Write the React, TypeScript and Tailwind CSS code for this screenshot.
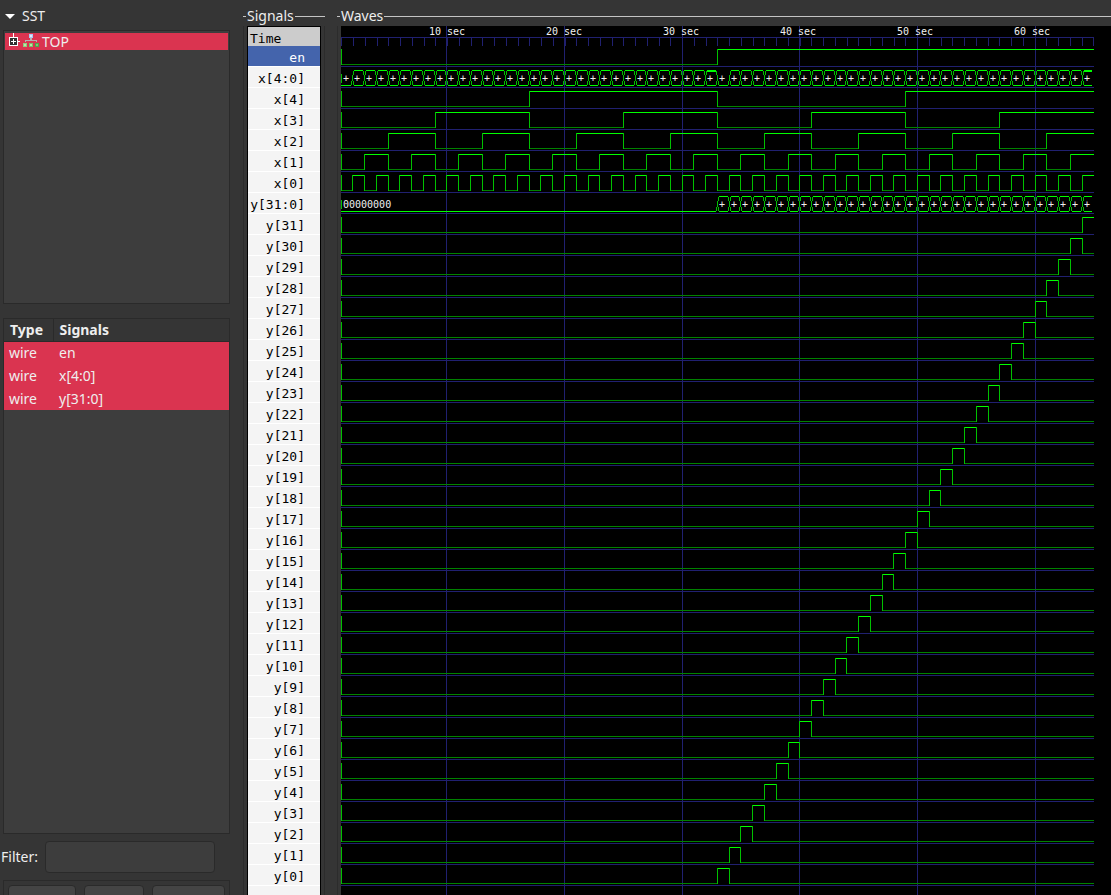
import React from "react";

const ROW = 21;
const PX_PER_SECOND = 11.765;
const END_X = 753;

const GRID = "#202070";
const HIGH = "#00ff00";
const EDGE = "#00c000";
const LOW = "#008200";

/** Horizontal pixel of a time stamp; the trace starts at t = 1. */
const px = (t: number) =>
  Math.max(0, t >= 65 ? END_X : Math.floor(PX_PER_SECOND * t - 11.8));

type Bit = { kind: "bit"; name: string; value: (t: number) => boolean };
type Bus = { kind: "bus"; name: string; value: (t: number) => number; max?: number };
type Signal = Bit | Bus;

const xAt = (t: number) => (t - 1) % 32;
const enAt = (t: number) => t >= 33;

const SIGNALS: Signal[] = [
  { kind: "bit", name: "en", value: enAt },
  { kind: "bus", name: "x[4:0]", value: xAt, max: 31 },
  ...[4, 3, 2, 1, 0].map(
    (b): Bit => ({ kind: "bit", name: `x[${b}]`, value: (t) => ((xAt(t) >> b) & 1) === 1 })
  ),
  { kind: "bus", name: "y[31:0]", value: (t) => (enAt(t) ? xAt(t) + 1 : 0) },
  ...Array.from({ length: 32 }, (_, i) => 31 - i).map(
    (b): Bit => ({ kind: "bit", name: `y[${b}]`, value: (t) => enAt(t) && xAt(t) === b })
  ),
];

function runs<T>(value: (t: number) => T) {
  const out: { from: number; to: number; v: T }[] = [];
  for (let t = 1; t < 65; t++) {
    const v = value(t);
    const last = out[out.length - 1];
    if (last && last.v === v) last.to = t + 1;
    else out.push({ from: t, to: t + 1, v });
  }
  return out;
}

function BitTrace({ signal, top }: { signal: Bit; top: number }) {
  return (
    <g>
      {runs(signal.value).map(({ from, to, v }) => {
        const a = px(from);
        const b = px(to);
        return (
          <g key={from}>
            <rect x={a} y={v ? top : top + 15} width={b - a + (to < 65 ? 1 : 0)} height={1} fill={v ? HIGH : LOW} />
            <rect x={a} y={top} width={1} height={16} fill={EDGE} />
          </g>
        );
      })}
    </g>
  );
}

function BusTrace({ signal, top }: { signal: Bus; top: number }) {
  return (
    <g>
      {runs(signal.value).map(({ from, to, v }) => {
        const a = px(from);
        const b = px(to);
        const last = to === 65;
        const first = from === 1;
        const left = first ? a : a + 2;
        const right = last ? b - 2 : b - 1;
        const zero = v === 0;
        return (
          <g key={from}>
            <g fill={EDGE}>
              {first && <rect x={a} y={top + 4} width={1} height={9} />}
              {!first && !zero && <rect x={a + 1} y={top + 1} width={1} height={4} />}
              {!first && <rect x={a + 1} y={top + 11} width={1} height={4} />}
              {!first && <rect x={a} y={top + 5} width={1} height={6} />}
              {!last && !zero && <rect x={b - 1} y={top + 1} width={1} height={4} />}
              {!last && <rect x={b - 1} y={top + 11} width={1} height={4} />}
            </g>
            <rect x={left} y={top + 15} width={right - left} height={1} fill={HIGH} />
            {!zero && (
              <rect x={left} y={top} width={right - left} height={v === signal.max ? 2 : 1} fill={HIGH} />
            )}
            <text x={a + 2} y={top + 12}>{to - from > 1 ? "00000000" : "+"}</text>
          </g>
        );
      })}
    </g>
  );
}

function WaveView() {
  const marks = [10, 20, 30, 40, 50, 60];
  return (
    <svg
      className="block h-full w-full font-['DejaVu_Sans_Mono',monospace] text-[10px]"
      shapeRendering="crispEdges"
      fill="#f0f0f0"
      role="img"
      aria-label="Waveforms"
    >
      <rect x={0} y={11} width={END_X} height={1} fill={GRID} />
      {Array.from({ length: 65 }, (_, n) => (
        <rect key={n} x={Math.ceil(n * 11.75)} y={11} width={1} height={9} fill={GRID} />
      ))}
      {SIGNALS.map((s, i) => (
        <rect key={s.name} x={0} y={40 + i * ROW} width={END_X} height={1} fill={GRID} />
      ))}
      {marks.map((m) => (
        <rect key={m} x={px(m)} y={0} width={1} height="100%" fill={GRID} />
      ))}
      {marks.map((m, i) => (
        <text key={m} x={88 + i * 117} y={9}>{`${m} sec`}</text>
      ))}
      {SIGNALS.map((s, i) =>
        s.kind === "bit" ? (
          <BitTrace key={s.name} signal={s} top={23 + i * ROW} />
        ) : (
          <BusTrace key={s.name} signal={s} top={23 + i * ROW} />
        )
      )}
    </svg>
  );
}

function FrameTitle({ children }: { children: React.ReactNode }) {
  return (
    <div className="flex h-[26px] shrink-0 items-center pt-[6px]">
      <span className="h-px w-[3px] bg-[#c4c4c4]" />
      <h2 className="px-px leading-5">{children}</h2>
      <span className="h-px flex-1 bg-[#c4c4c4]" />
    </div>
  );
}

function HierarchyIcon() {
  return (
    <svg width="37" height="17" shapeRendering="crispEdges" aria-hidden="true">
      <path d="M8 0h1v4h-1zM14 8h1v1h-1z" fill="#fff" />
      <rect x="4" y="4" width="9" height="9" fill="#fff" />
      <rect x="5" y="5" width="7" height="7" fill="#303030" />
      <path d="M6 8h5v1h-5zM8 6h1v5h-1zM13 8h2v1h-2z" fill="#fff" />
      <rect x="24" y="1" width="4" height="4" fill="#a9c9f2" />
      <rect x="25" y="2" width="2" height="2" fill="#dceafc" />
      <path d="M25 5h2v2h-2zM20 7h12v1h-12zM20 8h1v1h-1zM31 8h1v1h-1z" fill="#b9aeb0" />
      <path d="M18 10h4v4h-4z" fill="#8fd07f" />
      <path d="M24 10h4v4h-4z" fill="#79c46c" />
      <path d="M30 10h4v4h-4z" fill="#4fa84a" />
      <path d="M19 11h2v2h-2zM25 11h2v2h-2z" fill="#b9e6a8" />
      <path d="M31 11h2v2h-2z" fill="#7cc873" />
    </svg>
  );
}

const WIRES = ["en", "x[4:0]", "y[31:0]"];

function Sidebar() {
  return (
    <aside className="flex w-[243px] shrink-0 flex-col">
      <button type="button" className="flex h-[30px] shrink-0 items-center gap-[7px] pt-[2px] pl-[5px] text-left">
        <svg width="10" height="5" aria-hidden="true">
          <path d="M0 0h10L5 5z" fill="#fff" />
        </svg>
        SST
      </button>
      <div role="tree" aria-label="SST" className="mr-[13px] ml-[3px] h-[274px] shrink-0 border border-[#2a2a2a] bg-[#3d3d3d] px-px pt-[2px]">
        <div role="treeitem" aria-selected="true" className="flex h-[17px] items-center bg-[#da3450]">
          <HierarchyIcon />
          TOP
        </div>
      </div>
      <div className="mt-[14px] mr-[13px] ml-[3px] h-[516px] shrink-0 border border-[#2a2a2a] bg-[#3d3d3d]">
        <table className="w-full border-collapse text-left">
          <thead>
            <tr className="h-[22px] border-b border-[#2a2a2a] bg-[#353535]">
              <th className="w-[49px] border-r border-[#2a2a2a] p-0 pl-[6px] leading-5 font-bold">Type</th>
              <th className="p-0 pl-[6px] leading-5 font-bold">Signals</th>
            </tr>
          </thead>
          <tbody>
            {WIRES.map((name) => (
              <tr key={name} className="h-[23px] bg-[#da3450]">
                <td className="p-0 pl-[5px] leading-5">wire</td>
                <td className="p-0 pl-[6px] leading-5">{name}</td>
              </tr>
            ))}
          </tbody>
        </table>
      </div>
      <div className="mt-[7px] flex shrink-0 items-center gap-1 pl-px">
        <label htmlFor="filter" className="w-10 leading-5">Filter:</label>
        <input
          id="filter"
          type="text"
          className="h-8 w-[170px] rounded-[4px] border border-[#2a2a2a] bg-[#3d3d3d] px-2 outline-none"
        />
      </div>
      <div className="mt-[7px] mr-[13px] ml-[3px] flex shrink-0 gap-2 border border-[#2a2a2a] p-1">
        <button type="button" className="h-8 w-[68px] rounded-[4px] border border-[#2a2a2a] bg-[#444]">Append</button>
        <button type="button" className="h-8 w-[60px] rounded-[4px] border border-[#2a2a2a] bg-[#444]">Insert</button>
        <button type="button" className="h-8 flex-1 rounded-[4px] border border-[#2a2a2a] bg-[#444]">Replace</button>
      </div>
    </aside>
  );
}

export default function App() {
  return (
    <main className="flex h-screen overflow-hidden bg-[#353535] font-['Noto_Sans',sans-serif] text-[14px] leading-5 text-[#eeeeee]">
      <Sidebar />
      <section className="flex w-[82px] shrink-0 flex-col">
        <FrameTitle>Signals</FrameTitle>
        <div className="min-h-0 flex-1 border-x border-[#2c2c2c] pr-[3px] pl-[3px]">
          <div className="h-full overflow-hidden border-x border-t border-black bg-[#f4f4f4] font-['DejaVu_Sans_Mono',monospace] text-[13px] text-black">
            <div className="h-[19px] bg-[#cccccc] pl-[2px] leading-[23px]">Time</div>
            <ul>
              {SIGNALS.map((s, i) => (
                <li
                  key={s.name}
                  className={
                    i === 0
                      ? "h-[21px] border-b border-white bg-[#4464ac] pr-[15px] text-right leading-[23px] text-white"
                      : "h-[21px] border-b border-white pr-[15px] text-right leading-[23px]"
                  }
                >
                  {s.name}
                </li>
              ))}
            </ul>
          </div>
        </div>
      </section>
      <section className="ml-3 flex min-w-0 flex-1 flex-col">
        <FrameTitle>Waves</FrameTitle>
        <div className="min-h-0 flex-1 border-l border-[#2c2c2c] pl-[3px]">
          <div className="h-full overflow-hidden bg-black">
            <WaveView />
          </div>
        </div>
      </section>
    </main>
  );
}
